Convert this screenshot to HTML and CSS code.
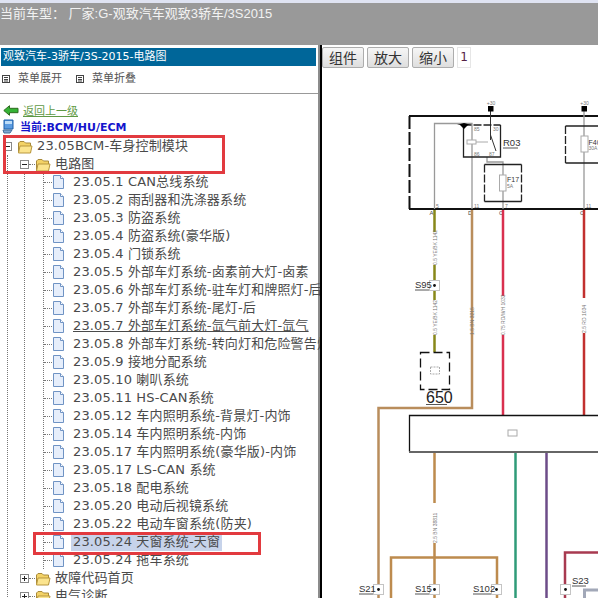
FILE: index.html
```html
<!DOCTYPE html>
<html lang="zh">
<head>
<meta charset="utf-8">
<title>电路图</title>
<link rel="stylesheet" href="styles.css">
</head>
<body>
<svg class="defs" width="0" height="0" aria-hidden="true">
  <symbol id="file" viewBox="0 0 11 14"><path d="M.5.5H7.5L10.5 3.5V13.5H.5Z" fill="#e6eefb" stroke="#6f93c4"/><path d="M7.5.5V3.5H10.5" fill="#fff" stroke="#6f93c4"/></symbol>
  <symbol id="folder" viewBox="0 0 16 15"><path d="M1.5 13V4L3 2.5H7L8.5 4H13.5V13.5H2Z" fill="#f3d266" stroke="#a98a3a"/><path d="M1.5 14 3 7H15L13.5 14Z" fill="#fbe48e" stroke="#b8973f"/></symbol>
  <symbol id="minus" viewBox="0 0 9 9"><rect x=".5" y=".5" width="8" height="8" fill="#fff" stroke="#888"/><path d="M2 4.5H7" stroke="#222"/></symbol>
  <symbol id="plus" viewBox="0 0 9 9"><rect x=".5" y=".5" width="8" height="8" fill="#fff" stroke="#888"/><path d="M2 4.5H7M4.5 2V7" stroke="#222"/></symbol>
  <symbol id="menu" viewBox="0 0 8 8"><rect x=".5" y=".5" width="7" height="7" fill="#fff" stroke="#444"/><path d="M2 2.5H6M2 4.5H6M2 6H6" stroke="#444"/></symbol>
  <symbol id="splice" viewBox="0 0 11 11"><rect x=".5" y=".5" width="10" height="10" fill="#fff" stroke="#c4c4c4"/><circle cx="5.5" cy="5.5" r="1.4" fill="#111"/></symbol>
</svg>

<header class="topbar">当前车型： 厂家:G-观致汽车观致3轿车/3S2015</header>

<main class="layout">
  <aside class="sidebar">
    <h1 class="side-title">观致汽车-3骄车/3S-2015-电路图</h1>
    <div class="side-menu">
      <span class="menu-item"><svg class="menu-icon"><use href="#menu"/></svg>菜单展开</span>
      <span class="menu-item"><svg class="menu-icon"><use href="#menu"/></svg>菜单折叠</span>
    </div>
    <div class="back-row">
      <svg class="back-icon" viewBox="0 0 16 11"><path d="M.8 5.5 6.5.7V3.300H15V7.700H6.500V10.300Z" fill="#35b335" stroke="#2d6b1f"/></svg>
      <a class="back-link">返回上一级</a>
    </div>
    <div class="current-row">
      <svg class="pc-icon" viewBox="0 0 12 15"><path d="M2 1H11V10H2Z" fill="#5b9be0" stroke="#1d5fa8"/><path d="M3 2H10V5H3Z" fill="#bcdcf8"/><path d="M1 11H10L8 14H2Z" fill="#7fa8d0" stroke="#44709c"/></svg>
      <span class="current-text">当前:BCM/HU/ECM</span>
    </div>
    <ul class="tree">
      <li>
        <div class="row"><svg class="box"><use href="#minus"/></svg><svg class="folder"><use href="#folder"/></svg><span class="label">23.05BCM-车身控制模块</span></div>
        <ul class="level1">
          <li>
            <div class="row row-branch"><svg class="box"><use href="#minus"/></svg><span class="stub stub-short"></span><svg class="folder"><use href="#folder"/></svg><span class="label">电路图</span></div>
            <ul class="level2">
              <li>
                <ul class="leaves">
                  <li class="leaf"><span class="stub"></span><svg class="file"><use href="#file"/></svg><span class="label">23.05.1 CAN总线系统</span></li>
                  <li class="leaf"><span class="stub"></span><svg class="file"><use href="#file"/></svg><span class="label">23.05.2 雨刮器和洗涤器系统</span></li>
                  <li class="leaf"><span class="stub"></span><svg class="file"><use href="#file"/></svg><span class="label">23.05.3 防盗系统</span></li>
                  <li class="leaf"><span class="stub"></span><svg class="file"><use href="#file"/></svg><span class="label">23.05.4 防盗系统(豪华版)</span></li>
                  <li class="leaf"><span class="stub"></span><svg class="file"><use href="#file"/></svg><span class="label">23.05.4 门锁系统</span></li>
                  <li class="leaf"><span class="stub"></span><svg class="file"><use href="#file"/></svg><span class="label">23.05.5 外部车灯系统-卤素前大灯-卤素</span></li>
                  <li class="leaf"><span class="stub"></span><svg class="file"><use href="#file"/></svg><span class="label">23.05.6 外部车灯系统-驻车灯和牌照灯-后</span></li>
                  <li class="leaf"><span class="stub"></span><svg class="file"><use href="#file"/></svg><span class="label">23.05.7 外部车灯系统-尾灯-后</span></li>
                  <li class="leaf"><span class="stub"></span><svg class="file"><use href="#file"/></svg><span class="label label-hover">23.05.7 外部车灯系统-氙气前大灯-氙气</span></li>
                  <li class="leaf"><span class="stub"></span><svg class="file"><use href="#file"/></svg><span class="label">23.05.8 外部车灯系统-转向灯和危险警告灯</span></li>
                  <li class="leaf"><span class="stub"></span><svg class="file"><use href="#file"/></svg><span class="label">23.05.9 接地分配系统</span></li>
                  <li class="leaf"><span class="stub"></span><svg class="file"><use href="#file"/></svg><span class="label">23.05.10 喇叭系统</span></li>
                  <li class="leaf"><span class="stub"></span><svg class="file"><use href="#file"/></svg><span class="label">23.05.11 HS-CAN系统</span></li>
                  <li class="leaf"><span class="stub"></span><svg class="file"><use href="#file"/></svg><span class="label">23.05.12 车内照明系统-背景灯-内饰</span></li>
                  <li class="leaf"><span class="stub"></span><svg class="file"><use href="#file"/></svg><span class="label">23.05.14 车内照明系统-内饰</span></li>
                  <li class="leaf"><span class="stub"></span><svg class="file"><use href="#file"/></svg><span class="label">23.05.17 车内照明系统(豪华版)-内饰</span></li>
                  <li class="leaf"><span class="stub"></span><svg class="file"><use href="#file"/></svg><span class="label">23.05.17 LS-CAN 系统</span></li>
                  <li class="leaf"><span class="stub"></span><svg class="file"><use href="#file"/></svg><span class="label">23.05.18 配电系统</span></li>
                  <li class="leaf"><span class="stub"></span><svg class="file"><use href="#file"/></svg><span class="label">23.05.20 电动后视镜系统</span></li>
                  <li class="leaf"><span class="stub"></span><svg class="file"><use href="#file"/></svg><span class="label">23.05.22 电动车窗系统(防夹)</span></li>
                  <li class="leaf"><span class="stub"></span><svg class="file"><use href="#file"/></svg><span class="label label-selected">23.05.24 天窗系统-天窗</span></li>
                  <li class="leaf"><span class="stub"></span><svg class="file"><use href="#file"/></svg><span class="label">23.05.24 拖车系统</span></li>
                </ul>
              </li>
            </ul>
          </li>
          <li>
            <div class="row row-branch"><svg class="box"><use href="#plus"/></svg><span class="stub stub-short"></span><svg class="folder"><use href="#folder"/></svg><span class="label">故障代码首页</span></div>
          </li>
          <li>
            <div class="row row-branch"><svg class="box"><use href="#plus"/></svg><span class="stub stub-short"></span><svg class="folder"><use href="#folder"/></svg><span class="label">电气诊断</span></div>
          </li>
        </ul>
      </li>
    </ul>
    <div class="mark mark-top"></div>
    <div class="mark mark-bottom"></div>
  </aside>

  <section class="viewer">
    <div class="toolbar">
      <button class="tool-btn" type="button">组件</button>
      <button class="tool-btn" type="button">放大</button>
      <button class="tool-btn" type="button">缩小</button>
      <span class="page-no">1</span>
    </div>
    <svg class="diagram" viewBox="322 70 276 528" width="276" height="528">
      <!-- upper module -->
      <path class="w-edge" d="M409 116H598M409 209H598"/>
      <path class="w-dash" d="M409.500 116V209"/>
      <path class="w-thin" d="M434.500 209V123.500H472V209M584 111V209M503 209V162H487V157"/>
      <path class="w-signal" d="M490.500 111V140M490.500 135 496 151"/>
      <rect class="sq" x="488" y="106" width="5.500" height="5.500"/>
      <rect class="sq" x="581.500" y="106" width="5.500" height="5.500"/>
      <text class="t-tiny t-mid" x="491" y="105">+30</text>
      <text class="t-tiny t-mid" x="584.500" y="105">+30</text>

      <path class="w-box" d="M463.500 125V157H500.500V125"/>
      <path class="w-box-dash" d="M463.500 125H500.500"/>
      <path class="sq" d="M457 125H471L464 123ZM460 125H468L464 129Z"/>
      <rect class="part" x="467" y="140" width="9" height="4"/>
      <path class="w-faint" d="M476 142H488"/>
      <text class="t-tiny" x="474" y="131">85</text><text class="t-tiny" x="493" y="131">30</text>
      <text class="t-tiny" x="474" y="156">86</text><text class="t-tiny" x="489" y="156">87</text>
      <text class="t-part" x="503" y="146">R03</text>
      <path class="w-under" d="M503 148H518"/>

      <path class="w-box" d="M484.500 164.500H521.500M484.500 201.500H521.500"/>
      <path class="w-box-dash" d="M484.500 164.500V201.500M521.500 164.500V201.500"/>
      <rect class="part" x="499.500" y="175" width="6.500" height="16"/>
      <text class="t-small" x="507" y="182">F17</text><text class="t-tiny" x="507" y="188">5A</text>

      <path class="w-box" d="M565.500 126H598M565.500 163H598"/>
      <path class="w-box-dash" d="M565.500 126V163"/>
      <rect class="part" x="581" y="136" width="7" height="16"/>
      <text class="t-small" x="588.500" y="145">F40</text><text class="t-tiny" x="588.500" y="150">30A</text>

      <text class="t-tiny" x="436" y="208">5</text><text class="t-tiny" x="474" y="208">11</text><text class="t-tiny" x="505" y="208">7</text><text class="t-tiny" x="586" y="208">11</text>
      <text class="t-pin" x="429.500" y="215">A</text><text class="t-pin" x="468" y="215">D</text><text class="t-pin" x="499" y="215">C</text><text class="t-pin" x="580" y="215">C</text>

      <!-- wires -->
      <path class="w-olive" d="M434.500 210V232M434.500 265V300M434.500 335V352"/>
      <path class="w-brown" d="M472 210V408H378.500V598"/>
      <path class="w-pink" d="M503 210V296M503 335V415"/>
      <path class="w-red" d="M584 210V298M584 333V415"/>
      <path class="w-orange" d="M434.500 452V503M434.500 543V598M391 598V557.500H497V598"/>
      <path class="w-teal" d="M515.500 452V598"/>
      <path class="w-purple" d="M546.500 452V598"/>
      <path class="w-wine" d="M565 598V552.500H598"/>
      <path class="w-steel" d="M584.500 598V590H598"/>

      <text class="t-wire" transform="translate(436.500 265) rotate(-90)">0.5 YE/BK 1142</text>
      <text class="t-wire" transform="translate(436.500 335) rotate(-90)">0.5 YE/BK 1142</text>
      <text class="t-wire" transform="translate(474 335) rotate(-90)">1.5 BN 3215</text>
      <text class="t-wire" transform="translate(505 335) rotate(-90)">0.75 RD/WH 1033</text>
      <text class="t-wire" transform="translate(586 333) rotate(-90)">2.5 RD 1034</text>
      <text class="t-wire" transform="translate(436.500 543) rotate(-90)">2.5 BN 38811</text>

      <!-- splices -->
      <use href="#splice" x="429" y="280" width="11" height="11"/>
      <text class="t-part" x="415" y="288">S95</text>
      <path class="w-under" d="M415 290H429"/>

      <path class="w-dash-thin" d="M420.500 352.500H449.500V389.500H420.500Z"/>
      <rect class="part part-dash" x="430.500" y="367" width="9" height="7"/>
      <text class="t-name" x="426" y="403">650</text>
      <path class="w-under" d="M426 404.500H447"/>

      <!-- lower module -->
      <path class="w-module" d="M598 415.500H409.500V451.500"/>
      <path class="w-module-b" d="M409 452H598"/>
      <rect class="part" x="508" y="430" width="9" height="6"/>

      <use href="#splice" x="373" y="584" width="11" height="11"/>
      <text class="t-part" x="359" y="592">S21</text>
      <path class="w-under" d="M359 594H373"/>
      <use href="#splice" x="429" y="584" width="11" height="11"/>
      <text class="t-part" x="415" y="592">S15</text>
      <path class="w-under" d="M415 594H429"/>
      <use href="#splice" x="491" y="584" width="11" height="11"/>
      <text class="t-part" x="473" y="592">S102</text>
      <path class="w-under" d="M473 594H491"/>
      <use href="#splice" x="560" y="584" width="11" height="11"/>
      <text class="t-part" x="572" y="584">S23</text>
      <path class="w-under" d="M572 586H586"/>
    </svg>
  </section>
</main>
</body>
</html>
```

FILE: styles.css
```css
* { box-sizing: border-box; }
html, body { margin: 0; height: 598px; overflow: hidden; background: #fff; }
ul { list-style: none; margin: 0; padding: 0; }
.defs { position: absolute; }

.topbar {
  height: 45px;
  background: #999;
  border-top: 3px solid #dfe3f2;
  color: #f2f2f2;
  font: 13px/22px "Liberation Sans", "Noto Sans CJK SC", sans-serif;
  white-space: pre;
}

.layout { display: grid; grid-template-columns: 322px 276px; height: 553px; }

.sidebar {
  position: relative;
  overflow: hidden;
  background: #fff;
  border-right: 2px solid #000;
  box-shadow: inset -2px 0 0 #8c8c8c;
  padding-top: 3px;
  font-family: "DejaVu Sans", "Noto Sans CJK SC", sans-serif;
  color: #4a4a4a;
}
.side-title {
  margin: 0 4px 0 1px;
  height: 18px;
  padding-left: 2px;
  background: #006699;
  color: #fff;
  font-size: 11px;
  font-weight: normal;
  line-height: 18px;
  white-space: nowrap;
}
.side-menu {
  display: flex;
  gap: 14px;
  margin-right: 2px;
  padding: 6px 0 0 2px;
  border-bottom: 1px solid #999;
  box-sizing: content-box;
  height: 21px;
  font-size: 11px;
  color: #555;
}
.menu-item { display: flex; align-items: flex-start; gap: 8px; line-height: 14px; }
.menu-icon { width: 8px; height: 8px; margin-top: 3px; }

.back-row { display: flex; align-items: center; gap: 4px; height: 16px; margin-top: 8px; padding-left: 3px; }
.back-icon { width: 16px; height: 11px; }
.back-link { color: #5f9a45; font-size: 11px; text-decoration: underline; }
.current-row { display: flex; align-items: center; gap: 6px; height: 16px; padding-left: 2px; }
.pc-icon { width: 12px; height: 15px; }
.current-text { color: #1414cc; font-size: 11px; font-weight: bold; }

.tree { margin-top: 3px; font-size: 13px; letter-spacing: .15px; white-space: nowrap; }
.row, .leaf { display: flex; align-items: center; height: 18px; }
.row { padding-left: 3px; }
.row-branch { padding-left: 12px; }
.box { width: 9px; height: 9px; flex: none; }
.folder { width: 16px; height: 15px; flex: none; margin: 0 4px 0 5px; }
.row-branch .folder { margin: 0 4px 0 0; }
.label { padding: 0 2px; line-height: 18px; }
.row .label { padding: 0; }
.file { width: 11px; height: 14px; flex: none; margin: 0 7px 0 1px; }
.stub { width: 8px; flex: none; border-top: 1px dotted #777; }
.stub-short { width: 6px; }
.level1 { margin-left: 7px; border-left: 1px dotted #777; }
.level2 { margin-left: 16px; border-left: 1px dotted #777; }
.leaves { margin-left: 18px; border-left: 1px dotted #777; }
.label-hover { text-decoration: underline; }
.label-selected { background: #c7d3ea; }

.mark { position: absolute; border: 3px solid #e23a3f; }
.mark-top { left: 3px; top: 90px; width: 222px; height: 39px; }
.mark-bottom { left: 33px; top: 487px; width: 228px; height: 23px; }

.viewer { display: flex; flex-direction: column; overflow: hidden; background: #fff; }
.toolbar { display: flex; gap: 3px; height: 25px; padding: 2px 0 0 0; }
.tool-btn {
  width: 42px;
  height: 21px;
  padding: 0;
  background: linear-gradient(#f6f6f6, #dedede);
  border: 1px solid #adadad;
  border-radius: 2px;
  color: #333;
  font: 14px/19px "Noto Sans CJK SC", sans-serif;
}
.page-no {
  width: 14px;
  height: 21px;
  border: 1px solid #e6e6e6;
  text-align: center;
  color: #552244;
  font: 12px/19px "DejaVu Sans", sans-serif;
}
.diagram { display: block; flex: none; }

.diagram path, .diagram rect.part { fill: none; }
.w-edge { stroke: #111; stroke-width: 2; }
.w-dash { stroke: #111; stroke-width: 2; stroke-dasharray: 13 3; }
.w-thin { stroke: #999; stroke-width: 1.300; }
.w-signal { stroke: #333; stroke-width: 1; }
.diagram .sq { fill: #000; stroke: none; }
.w-box { stroke: #222; stroke-width: 1.300; }
.w-box-dash { stroke: #222; stroke-width: 1.300; stroke-dasharray: 8 2; }
.w-dash-thin { stroke: #111; stroke-width: 1.300; stroke-dasharray: 9 4; }
.w-faint { stroke: #aaa; stroke-width: 1; }
.w-under { stroke: #555; stroke-width: 1; }
.diagram rect.part { fill: #fff; stroke: #aaa; stroke-width: 1; }
.diagram rect.part-dash { stroke-dasharray: 2 1; }

.w-olive { stroke: #88881a; stroke-width: 2.500; }
.w-brown { stroke: #b98d5c; stroke-width: 2.500; }
.w-pink { stroke: #d9304f; stroke-width: 2.500; }
.w-red { stroke: #c2302f; stroke-width: 2.500; }
.w-orange { stroke: #bd8b4e; stroke-width: 2.500; }
.w-teal { stroke: #2f9b78; stroke-width: 2.500; }
.w-purple { stroke: #6d4c88; stroke-width: 2.500; }
.w-wine { stroke: #a83a50; stroke-width: 2.500; }
.w-steel { stroke: #a2a8b8; stroke-width: 3; }
.w-module { stroke: #111; stroke-width: 1.300; }
.w-module-b { stroke: #666; stroke-width: 2; }

.diagram text { font-family: "Liberation Sans", sans-serif; }
.t-tiny { font-size: 5px; fill: #777; }
.t-mid { text-anchor: middle; }
.t-pin { font-size: 6px; fill: #444; }
.t-small { font-size: 7px; fill: #333; }
.t-part { font-size: 9.500px; fill: #333; }
.t-name { font-size: 16px; fill: #222; }
.t-wire { font-size: 5px; fill: #777; }
```
